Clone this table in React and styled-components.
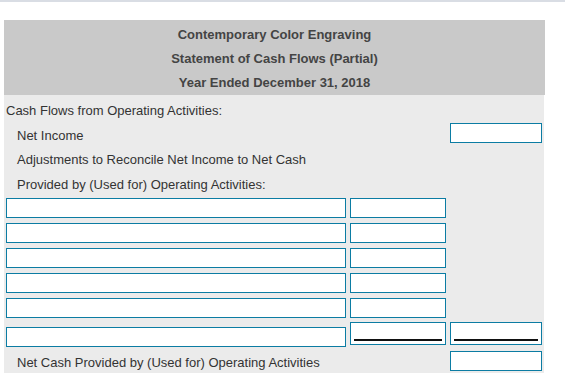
import React from 'react'
import styled, { createGlobalStyle } from 'styled-components'

const GlobalStyle = createGlobalStyle`
    body {
        margin: 0;
        background: #fff;
        font-family: "Liberation Sans", Arial, sans-serif;
        color: #333;
    }
`

const TopRule = styled.div`
    height: 2px;
    background: #d9dde4;
`

const Sheet = styled.div`
    width: 541px;
    margin: 18px 0 0 4px;
`

const Heading = styled.div`
    background: #c9c9c9;
    height: 75px;
    padding-top: 3px;
    box-sizing: border-box;
    text-align: center;
    font-size: 13px;
    font-weight: bold;
    color: #444;

    div {
        height: 24px;
        line-height: 24px;
    }
`

const Body = styled.div`
    background: #ebebeb;
    width: 540px;
    padding-top: 2px;
    padding-bottom: 1px;
`

const Row = styled.div`
    display: grid;
    grid-template-columns: 340px 96px 92px;
    column-gap: 4px;
    padding-left: 2px;
    height: 25px;
    align-items: start;
    font-size: 13px;
    line-height: 25px;
`

const Label = styled.div`
    grid-column: 1 / span 2;
    padding-left: ${props => props.indent ? 11 : 0}px;
    margin-top: ${props => props.top || 0}px;
    white-space: nowrap;
`

const Field = styled.div`
    grid-column: ${props => props.col};
    height: ${props => props.tall ? 23 : 20}px;
    margin-top: ${props => props.top || 0}px;
    box-sizing: border-box;
    border: 1px solid #0b7ca3;
    background: #fff;
    padding: 0 3px 3px;
    display: flex;
    align-items: flex-end;
`

const Total = styled.div`
    width: 100%;
    border-bottom: 2px solid #111;
`

function Entry({col, top, tall, total}) {
    return (
        <Field col={col} top={top} tall={tall}>
            {total && <Total />}
        </Field>
    )
}

export default function App() {
    const adjustments = [0, 1, 2, 3, 4]

    return (
        <>
            <GlobalStyle />
            <TopRule />
            <Sheet>
                <Heading>
                    <div>Contemporary Color Engraving</div>
                    <div>Statement of Cash Flows (Partial)</div>
                    <div>Year Ended December 31, 2018</div>
                </Heading>

                <Body>
                    <Row>
                        <Label top={1}>Cash Flows from Operating Activities:</Label>
                    </Row>
                    <Row>
                        <Label indent top={1}>Net Income</Label>
                        <Entry col={3} top={1} />
                    </Row>
                    <Row>
                        <Label indent>Adjustments to Reconcile Net Income to Net Cash</Label>
                    </Row>
                    <Row>
                        <Label indent>Provided by (Used for) Operating Activities:</Label>
                    </Row>

                    {adjustments.map(i => (
                        <Row key={i}>
                            <Entry col={1} top={1} />
                            <Entry col={2} top={1} />
                        </Row>
                    ))}

                    <Row>
                        <Entry col={1} top={5} />
                        <Entry col={2} tall total />
                        <Entry col={3} tall total />
                    </Row>
                    <Row>
                        <Label indent top={3}>Net Cash Provided by (Used for) Operating Activities</Label>
                        <Entry col={3} top={4} />
                    </Row>
                </Body>
            </Sheet>
        </>
    )
}
